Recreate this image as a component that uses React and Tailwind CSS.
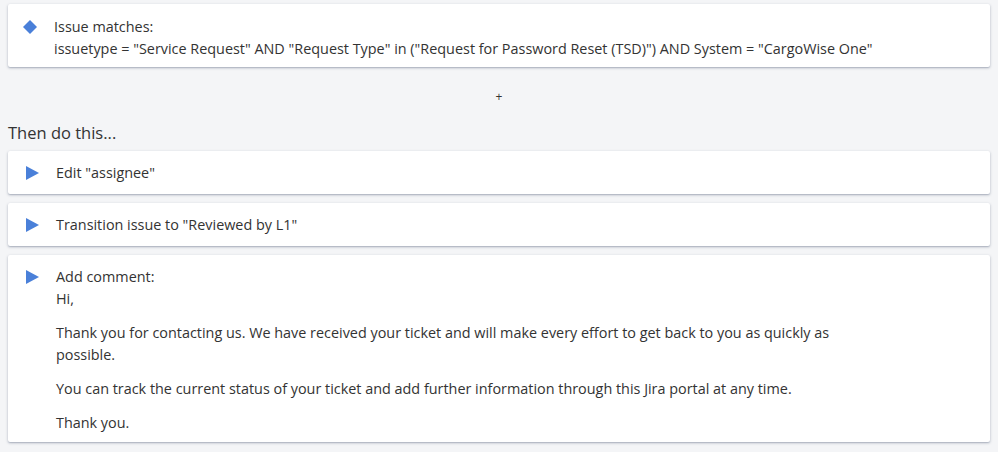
const font = { fontFamily: '"Open Sans", "Noto Sans", sans-serif' };

function Diamond() {
  return (
    <svg width="14" height="14" viewBox="0 0 14 14" className="shrink-0">
      <path d="M7 0 L14 7 L7 14 L0 7 Z" fill="#4a80d9" />
    </svg>
  );
}

function Play() {
  return (
    <svg width="13" height="14" viewBox="0 0 13 14" className="shrink-0">
      <path d="M0 0 L13 7 L0 14 Z" fill="#4a80d9" />
    </svg>
  );
}

const cardCls = 'relative bg-white rounded-[2px] shadow-[0_1px_3px_rgba(9,30,66,0.28),0_1px_1px_rgba(9,30,66,0.1)]';

function Card({ children, last }) {
  return (
    <div className={cardCls}>
      <div className="absolute left-[18px] top-[15px]"><Play /></div>
      <div className={`pl-[48px] pr-4 pt-[11px] ${last ? 'pb-[8px]' : 'pb-[10px]'} text-[14.4px] leading-[22px] text-[#333]`}>{children}</div>
    </div>
  );
}

export default function App() {
  return (
    <div className="w-[998px] h-[452px] bg-[#f4f5f7] px-[8px] pt-[4px] overflow-hidden" style={font}>
      <div className="w-[982px]">
        <div className={cardCls}>
          <div className="absolute left-[15px] top-[16px]"><Diamond /></div>
          <div className="pl-[46px] pr-4 pt-[12px] pb-[7px] text-[14.4px] leading-[22px] text-[#333]">
            <div>Issue matches:</div>
            <div>issuetype = "Service Request" AND "Request Type" in ("Request for Password Reset (TSD)") AND System = "CargoWise One"</div>
          </div>
        </div>

        <div className="h-[60px] flex items-center justify-center text-[12px] text-[#333]">+</div>

        <div className="text-[16.5px] leading-[22px] text-[#333] -mt-[5px] mb-[7px]">Then do this...</div>

        <div className="flex flex-col gap-[9px]">
          <Card>Edit "assignee"</Card>
          <Card>Transition issue to "Reviewed by L1"</Card>
          <Card last>
            <div className="max-w-[790px]">
              <div>Add comment:</div>
              <div className="mb-[12px]">Hi,</div>
              <p className="mb-[12px]">Thank you for contacting us. We have received your ticket and will make every effort to get back to you as quickly as possible.</p>
              <p className="mb-[12px]">You can track the current status of your ticket and add further information through this Jira portal at any time.</p>
              <p>Thank you.</p>
            </div>
          </Card>
        </div>
      </div>
    </div>
  );
}
